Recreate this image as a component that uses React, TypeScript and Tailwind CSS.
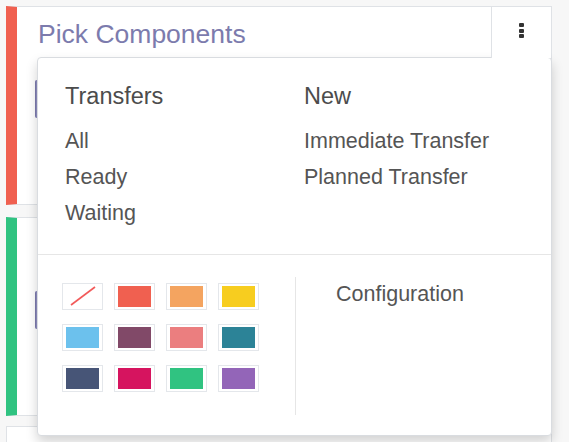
import React from "react";

const colors = [
  null,
  "#f06050",
  "#f4a460",
  "#f7cd1f",
  "#6cc1ed",
  "#814968",
  "#eb7e7f",
  "#2c8397",
  "#475577",
  "#d6145f",
  "#30c381",
  "#9365b8",
];

const Swatch = ({ color }: { color: string | null }) => (
  <div className="w-[41px] h-[27px] border border-[#e4e7eb] px-[3px] py-[2px] bg-white">
    {color ? (
      <div className="w-full h-full" style={{ backgroundColor: color }} />
    ) : (
      <svg className="w-full h-full" viewBox="0 0 33 21">
        <line x1="5" y1="19" x2="29" y2="1" stroke="#f25a5a" strokeWidth="1.6" />
      </svg>
    )}
  </div>
);

const Dropdown = () => (
  <div className="absolute z-10 top-[50px] left-[20px] right-[-1px] h-[379px] bg-white border border-[#d9dce0] rounded-[4px] shadow-[0_6px_12px_rgba(0,0,0,0.175)] text-[#4c4c4c]">
    <div className="h-[197px] border-b border-[#e6e6e6] pl-[27px] pt-[25px] grid grid-cols-[239px_1fr]">
      <div>
        <div className="text-[23.5px] leading-[26px] mb-[14px]">Transfers</div>
        <div className="text-[21.5px] leading-[36px] text-[#555]">
          <div>All</div>
          <div>Ready</div>
          <div>Waiting</div>
        </div>
      </div>
      <div>
        <div className="text-[23.5px] leading-[26px] mb-[14px]">New</div>
        <div className="text-[21.5px] leading-[36px] text-[#555]">
          <div>Immediate Transfer</div>
          <div>Planned Transfer</div>
        </div>
      </div>
    </div>
    <div className="flex">
      <div className="w-[257px] pl-[24px] pt-[28px]">
        <div className="grid grid-cols-[repeat(4,41px)] gap-x-[11px] gap-y-[14px]">
          {colors.map((c, i) => (
            <Swatch key={i} color={c} />
          ))}
        </div>
      </div>
      <div className="mt-[22px] h-[138px] border-l border-[#e6e6e6] pl-[40px] pt-[5px]">
        <div className="text-[21.5px] leading-[24px] text-[#555]">Configuration</div>
      </div>
    </div>
  </div>
);

const Card = ({ stripe, title, open }: { stripe: string; title: string; open?: boolean }) => (
  <div className={`relative h-[199px] bg-white border border-[#dfe2e6] border-l-[11px] ${stripe}`}>
    <div className="flex">
      <div className="flex-1 h-[50px] pl-[21px] pt-[3px] flex items-center">
        <span className="text-[26.5px] leading-[30px] text-[#7c7bad]">{title}</span>
      </div>
      <div
        className={`relative w-[60px] h-[51px] bg-white flex justify-center pt-[16px] ${
          open ? "z-20 border-l border-[#dfe2e6]" : ""
        }`}
      >
        <div className="flex flex-col gap-[1.5px]">
          <span className="w-[5px] h-[4px] rounded-[1px] bg-[#333]" />
          <span className="w-[5px] h-[4px] rounded-[1px] bg-[#333]" />
          <span className="w-[5px] h-[4px] rounded-[1px] bg-[#333]" />
        </div>
      </div>
    </div>
    <div className="pl-[18px] pt-[22px]">
      <div className="w-[160px] h-[38px] rounded-[2px] bg-[#8f8ec0] border-l border-[#7c7bad]" />
    </div>
    {open && <Dropdown />}
  </div>
);

export default function App() {
  return (
    <div className="w-[569px] h-[442px] overflow-hidden bg-[#f7f7f7] pt-[6px] pl-[6px] font-['Liberation_Sans',Arial,sans-serif]">
      <div className="w-[546px] flex flex-col">
        <div className="relative z-10">
          <Card stripe="border-l-[#f06050]" title="Pick Components" open />
        </div>
        <div className="relative z-0 mt-[12px]">
          <Card stripe="border-l-[#30c381]" title="Receipts" />
        </div>
        <div className="mt-[10px] h-[60px] bg-white border border-[#dfe2e6]" />
      </div>
    </div>
  );
}
